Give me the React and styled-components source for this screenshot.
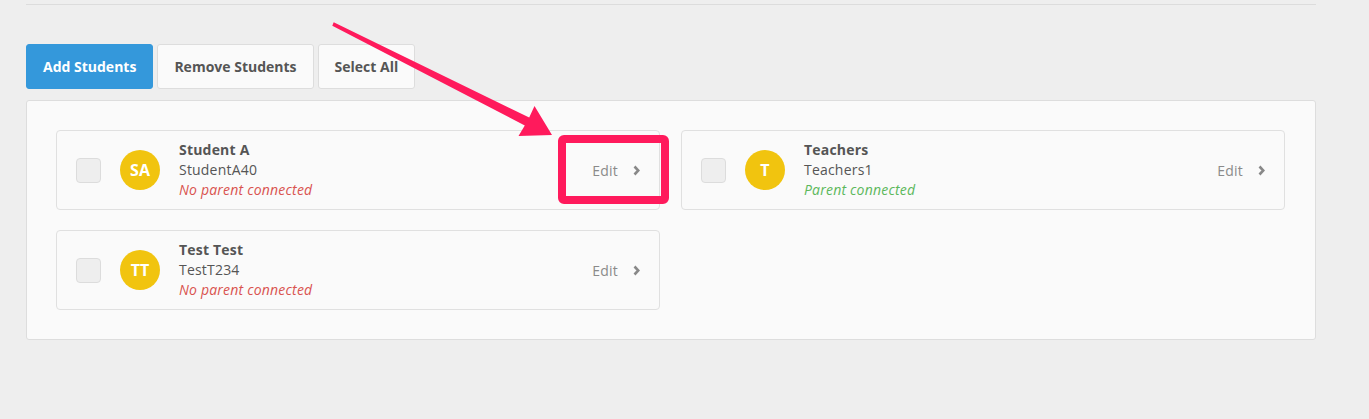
import React from 'react'
import styled, { createGlobalStyle } from 'styled-components'

const GlobalStyle = createGlobalStyle`
  html, body {
    margin: 0;
    padding: 0;
    background: #eeeeee;
    font-family: "Open Sans", "Liberation Sans", sans-serif;
  }
`;

const Page = styled.div`
  position: relative;
  width: 1290px;
  padding: 0 26px;
  min-height: 419px;
`;

const TopRule = styled.div`
  margin-top: 4px;
  border-top: 1px solid #dcdcdc;
`;

const Toolbar = styled.div`
  display: flex;
  gap: 4px;
  margin-top: 39px;
`;

const Button = styled.button`
  height: 45px;
  padding: 0 16px;
  border-radius: 3px;
  border: 1px solid ${p => (p.$primary ? '#3498db' : '#dddddd')};
  background: ${p => (p.$primary ? '#3498db' : '#fafafa')};
  color: ${p => (p.$primary ? '#ffffff' : '#555555')};
  font-family: inherit;
  font-size: 14px;
  font-weight: 700;
  cursor: pointer;
`;

const Panel = styled.div`
  margin-top: 11px;
  background: #fafafa;
  border: 1px solid #dddddd;
  border-radius: 3px;
  padding: 29px 30px 29px 29px;
  display: grid;
  grid-template-columns: 604px 604px;
  column-gap: 21px;
  row-gap: 20px;
`;

const Card = styled.div`
  box-sizing: border-box;
  height: 80px;
  display: flex;
  align-items: center;
  padding: 0 19px;
  background: #fafafa;
  border: 1px solid #e0e0e0;
  border-radius: 4px;
`;

const Check = styled.span`
  box-sizing: border-box;
  width: 25px;
  height: 25px;
  border: 1px solid #dcdcdc;
  border-radius: 4px;
  background: #eeeeee;
  flex-shrink: 0;
`;

const Avatar = styled.div`
  width: 40px;
  height: 40px;
  margin-left: 19px;
  border-radius: 50%;
  background: #f1c40f;
  color: #ffffff;
  font-size: 16px;
  font-weight: 700;
  display: flex;
  align-items: center;
  justify-content: center;
  flex-shrink: 0;
`;

const Info = styled.div`
  margin-left: 19px;
  flex: 1;
  display: flex;
  flex-direction: column;
  font-size: 14px;
  letter-spacing: 0.2px;
  line-height: 20px;
  color: #555555;
`;

const Name = styled.div`
  font-weight: 700;
`;

const Status = styled.div`
  font-style: italic;
  color: ${p => (p.$connected ? '#5cb85c' : '#d9534f')};
`;

const EditLink = styled.a`
  display: flex;
  align-items: center;
  gap: 14px;
  font-size: 14px;
  letter-spacing: 0.2px;
  color: #8a8a8a;
  text-decoration: none;
  cursor: pointer;
`;

const Callout = styled.svg`
  position: absolute;
  left: 0;
  top: 0;
  pointer-events: none;
`;

const Chevron = () => (
  <svg width="8" height="11" viewBox="0 0 8 11">
    <polyline points="2.5,1.5 6.3,5.5 2.5,9.5" fill="none" stroke="#888" strokeWidth="2.6" />
  </svg>
);

const students = [
  { initials: 'SA', name: 'Student A', username: 'StudentA40', connected: false },
  { initials: 'T', name: 'Teachers', username: 'Teachers1', connected: true },
  { initials: 'TT', name: 'Test Test', username: 'TestT234', connected: false },
];

const StudentCard = ({ s }) => (
  <Card>
    <Check />
    <Avatar>{s.initials}</Avatar>
    <Info>
      <Name>{s.name}</Name>
      <div>{s.username}</div>
      <Status $connected={s.connected}>
        {s.connected ? 'Parent connected' : 'No parent connected'}
      </Status>
    </Info>
    <EditLink>
      Edit
      <Chevron />
    </EditLink>
  </Card>
);

export default function App() {
  return (
    <>
      <GlobalStyle />
      <Page>
        <TopRule />
        <Toolbar>
          <Button $primary>Add Students</Button>
          <Button>Remove Students</Button>
          <Button>Select All</Button>
        </Toolbar>
        <Panel>
          {students.map(s => (
            <StudentCard key={s.username} s={s} />
          ))}
        </Panel>

        {/* annotation drawn over the screenshot */}
        <Callout width="700" height="220" viewBox="0 0 700 220">
          <polygon
            points="333.7,18.3 332.3,21.7 524.8,121.5 518.5,132 552,131 534.5,102 529.2,113.5"
            fill="#ff1a5c"
          />
          <rect x="562" y="135" width="103" height="61" rx="2" fill="none" stroke="#ff1a5c" strokeWidth="8" />
        </Callout>
      </Page>
    </>
  );
}
